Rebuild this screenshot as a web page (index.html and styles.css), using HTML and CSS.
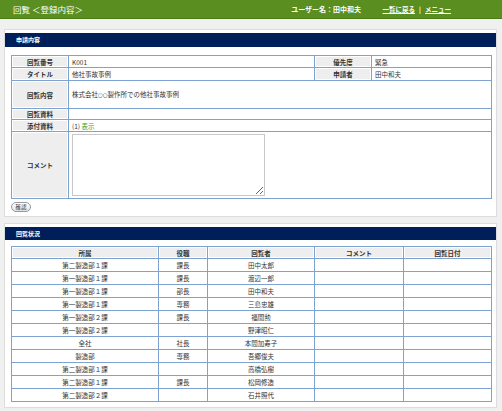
FILE: index.html
```html
<!DOCTYPE html>
<html>
    <head>
        <meta charset="utf-8">
        <title>回覧 ＜登録内容＞</title>
        <link rel="stylesheet" href="styles.css">
    </head>
    <body>
        <header class="topbar">
            <h1 class="page-title">回覧 ＜登録内容＞</h1>
            <div class="user-nav">
                <span class="user-name">ユーザー名：田中和夫</span>
                <a href="#">一覧に戻る</a><span class="sep">|</span><a href="#">メニュー</a>
            </div>
        </header>

        <section class="panel">
            <h2 class="panel-title">申請内容</h2>
            <table class="detail-table">
                <colgroup>
                    <col class="col-label">
                    <col class="col-value">
                    <col class="col-label">
                    <col class="col-short">
                </colgroup>
                <tr class="row-s">
                    <th>回覧番号</th>
                    <td>K001</td>
                    <th>優先度</th>
                    <td>緊急</td>
                </tr>
                <tr class="row-m">
                    <th>タイトル</th>
                    <td>他社事故事例</td>
                    <th>申請者</th>
                    <td>田中和夫</td>
                </tr>
                <tr class="row-content">
                    <th>回覧内容</th>
                    <td colspan="3">株式会社<span class="circle">○○</span>製作所での他社事故事例</td>
                </tr>
                <tr class="row-xs">
                    <th>回覧資料</th>
                    <td colspan="3"></td>
                </tr>
                <tr class="row-s">
                    <th>添付資料</th>
                    <td colspan="3">(1) <a href="#" class="file-link">表示</a></td>
                </tr>
                <tr class="row-comment">
                    <th>コメント</th>
                    <td colspan="3"><textarea class="comment-box"></textarea></td>
                </tr>
            </table>
            <button class="confirm-button">確認</button>
        </section>

        <section class="panel">
            <h2 class="panel-title">回覧状況</h2>
            <table class="status-table">
                <colgroup>
                    <col class="col-dept">
                    <col class="col-post">
                    <col class="col-name">
                    <col class="col-comment">
                    <col class="col-date">
                </colgroup>
                <tr>
                    <th>所属</th>
                    <th>役職</th>
                    <th>回覧者</th>
                    <th>コメント</th>
                    <th>回覧日付</th>
                </tr>
                <tr><td>第二製造部１課</td><td>課長</td><td>田中太郎</td><td></td><td></td></tr>
                <tr><td>第一製造部１課</td><td>課長</td><td>渡辺一郎</td><td></td><td></td></tr>
                <tr><td>第一製造部１課</td><td>部長</td><td>田中和夫</td><td></td><td></td></tr>
                <tr><td>第一製造部１課</td><td>専務</td><td>三島忠雄</td><td></td><td></td></tr>
                <tr><td>第一製造部２課</td><td>課長</td><td>福聞勲</td><td></td><td></td></tr>
                <tr><td>第一製造部２課</td><td></td><td>野津昭仁</td><td></td><td></td></tr>
                <tr><td>全社</td><td>社長</td><td>本間加寿子</td><td></td><td></td></tr>
                <tr><td>製造部</td><td>専務</td><td>吾郷俊夫</td><td></td><td></td></tr>
                <tr><td>第二製造部１課</td><td></td><td>高橋弘樹</td><td></td><td></td></tr>
                <tr><td>第二製造部１課</td><td>課長</td><td>松岡修造</td><td></td><td></td></tr>
                <tr><td>第二製造部２課</td><td></td><td>石井照代</td><td></td><td></td></tr>
            </table>
        </section>
    </body>
</html>
```

FILE: styles.css
```css
body {
    margin: 0;
    background-color: #f0f0f0;
    font-family: "Noto Sans CJK JP", "DejaVu Sans", sans-serif;
    font-size: 6.5px;
    color: #333;
}

.topbar {
    display: flex;
    align-items: center;
    height: 18px;
    padding: 0 51px 0 13px;
    background-color: #5a8e20;
    border-bottom: 1px solid #4c7c18;
    color: #fff;
}

.page-title {
    flex: 1;
    margin: 0;
    font-size: 8.5px;
    font-weight: normal;
}

.user-nav {
    font-weight: bold;
}

.user-nav .user-name {
    margin-right: 20px;
    font-size: 7px;
}

.user-nav a {
    color: #fff;
}

.user-nav .sep {
    margin: 0 4px;
}

.panel {
    margin: 10px 5px 0 4px;
    padding: 3px 0 4px;
    background-color: #fff;
    border: 1px solid #ddd;
}

.panel + .panel {
    margin-top: 6px;
}

.panel-title {
    margin: 0 0 8px;
    height: 14px;
    line-height: 14px;
    padding-left: 11px;
    background-color: #001f5a;
    color: #fff;
    font-size: 6px;
    font-weight: bold;
}

.panel + .panel .panel-title {
    height: 13px;
    line-height: 13px;
    margin-bottom: 6px;
}

table {
    border-collapse: collapse;
    table-layout: fixed;
    width: 480px;
    margin-left: 6px;
}

th, td {
    border: 1px solid #7ea3d3;
    padding: 0 3px;
    line-height: 10px;
    white-space: nowrap;
    overflow: hidden;
}

th {
    background-color: #eeeeee;
    box-shadow: inset 0 0 0 1px #fff;
    font-weight: bold;
    text-align: center;
}

.col-label {
    width: 57px;
}

.col-value {
    width: 246px;
}

.col-short {
    width: 120px;
}

.detail-table tr.row-s {
    height: 12px;
}

.detail-table tr.row-m {
    height: 13px;
}

.detail-table tr.row-content {
    height: 28px;
}

.detail-table tr.row-xs {
    height: 11px;
}

.detail-table tr.row-comment {
    height: 67px;
}

.circle {
    font-family: "DejaVu Sans", sans-serif;
    font-size: 5.5px;
}

.file-link {
    color: #4f9a25;
    text-decoration: none;
}

.comment-box {
    display: block;
    width: 193px;
    height: 62px;
    margin: 0;
    padding: 0;
    border: 1px solid #c8c8c8;
    resize: both;
    box-sizing: border-box;
}

.confirm-button {
    display: block;
    margin: 3px 0 0 6px;
    width: 20px;
    height: 10px;
    padding: 0;
    border: 1px solid #999;
    border-radius: 5px;
    background: linear-gradient(#fff, #e2e2e2);
    font-family: inherit;
    font-size: 5.5px;
    color: #333;
    line-height: 8px;
}

.status-table {
    margin-bottom: 1px;
}

.col-dept {
    width: 147px;
}

.col-post {
    width: 49px;
}

.col-name {
    width: 107px;
}

.col-comment {
    width: 89px;
}

.col-date {
    width: 88px;
}

.status-table tr {
    height: 13px;
}

.status-table tr:first-child {
    height: 12px;
}

.status-table td {
    text-align: center;
}
```
